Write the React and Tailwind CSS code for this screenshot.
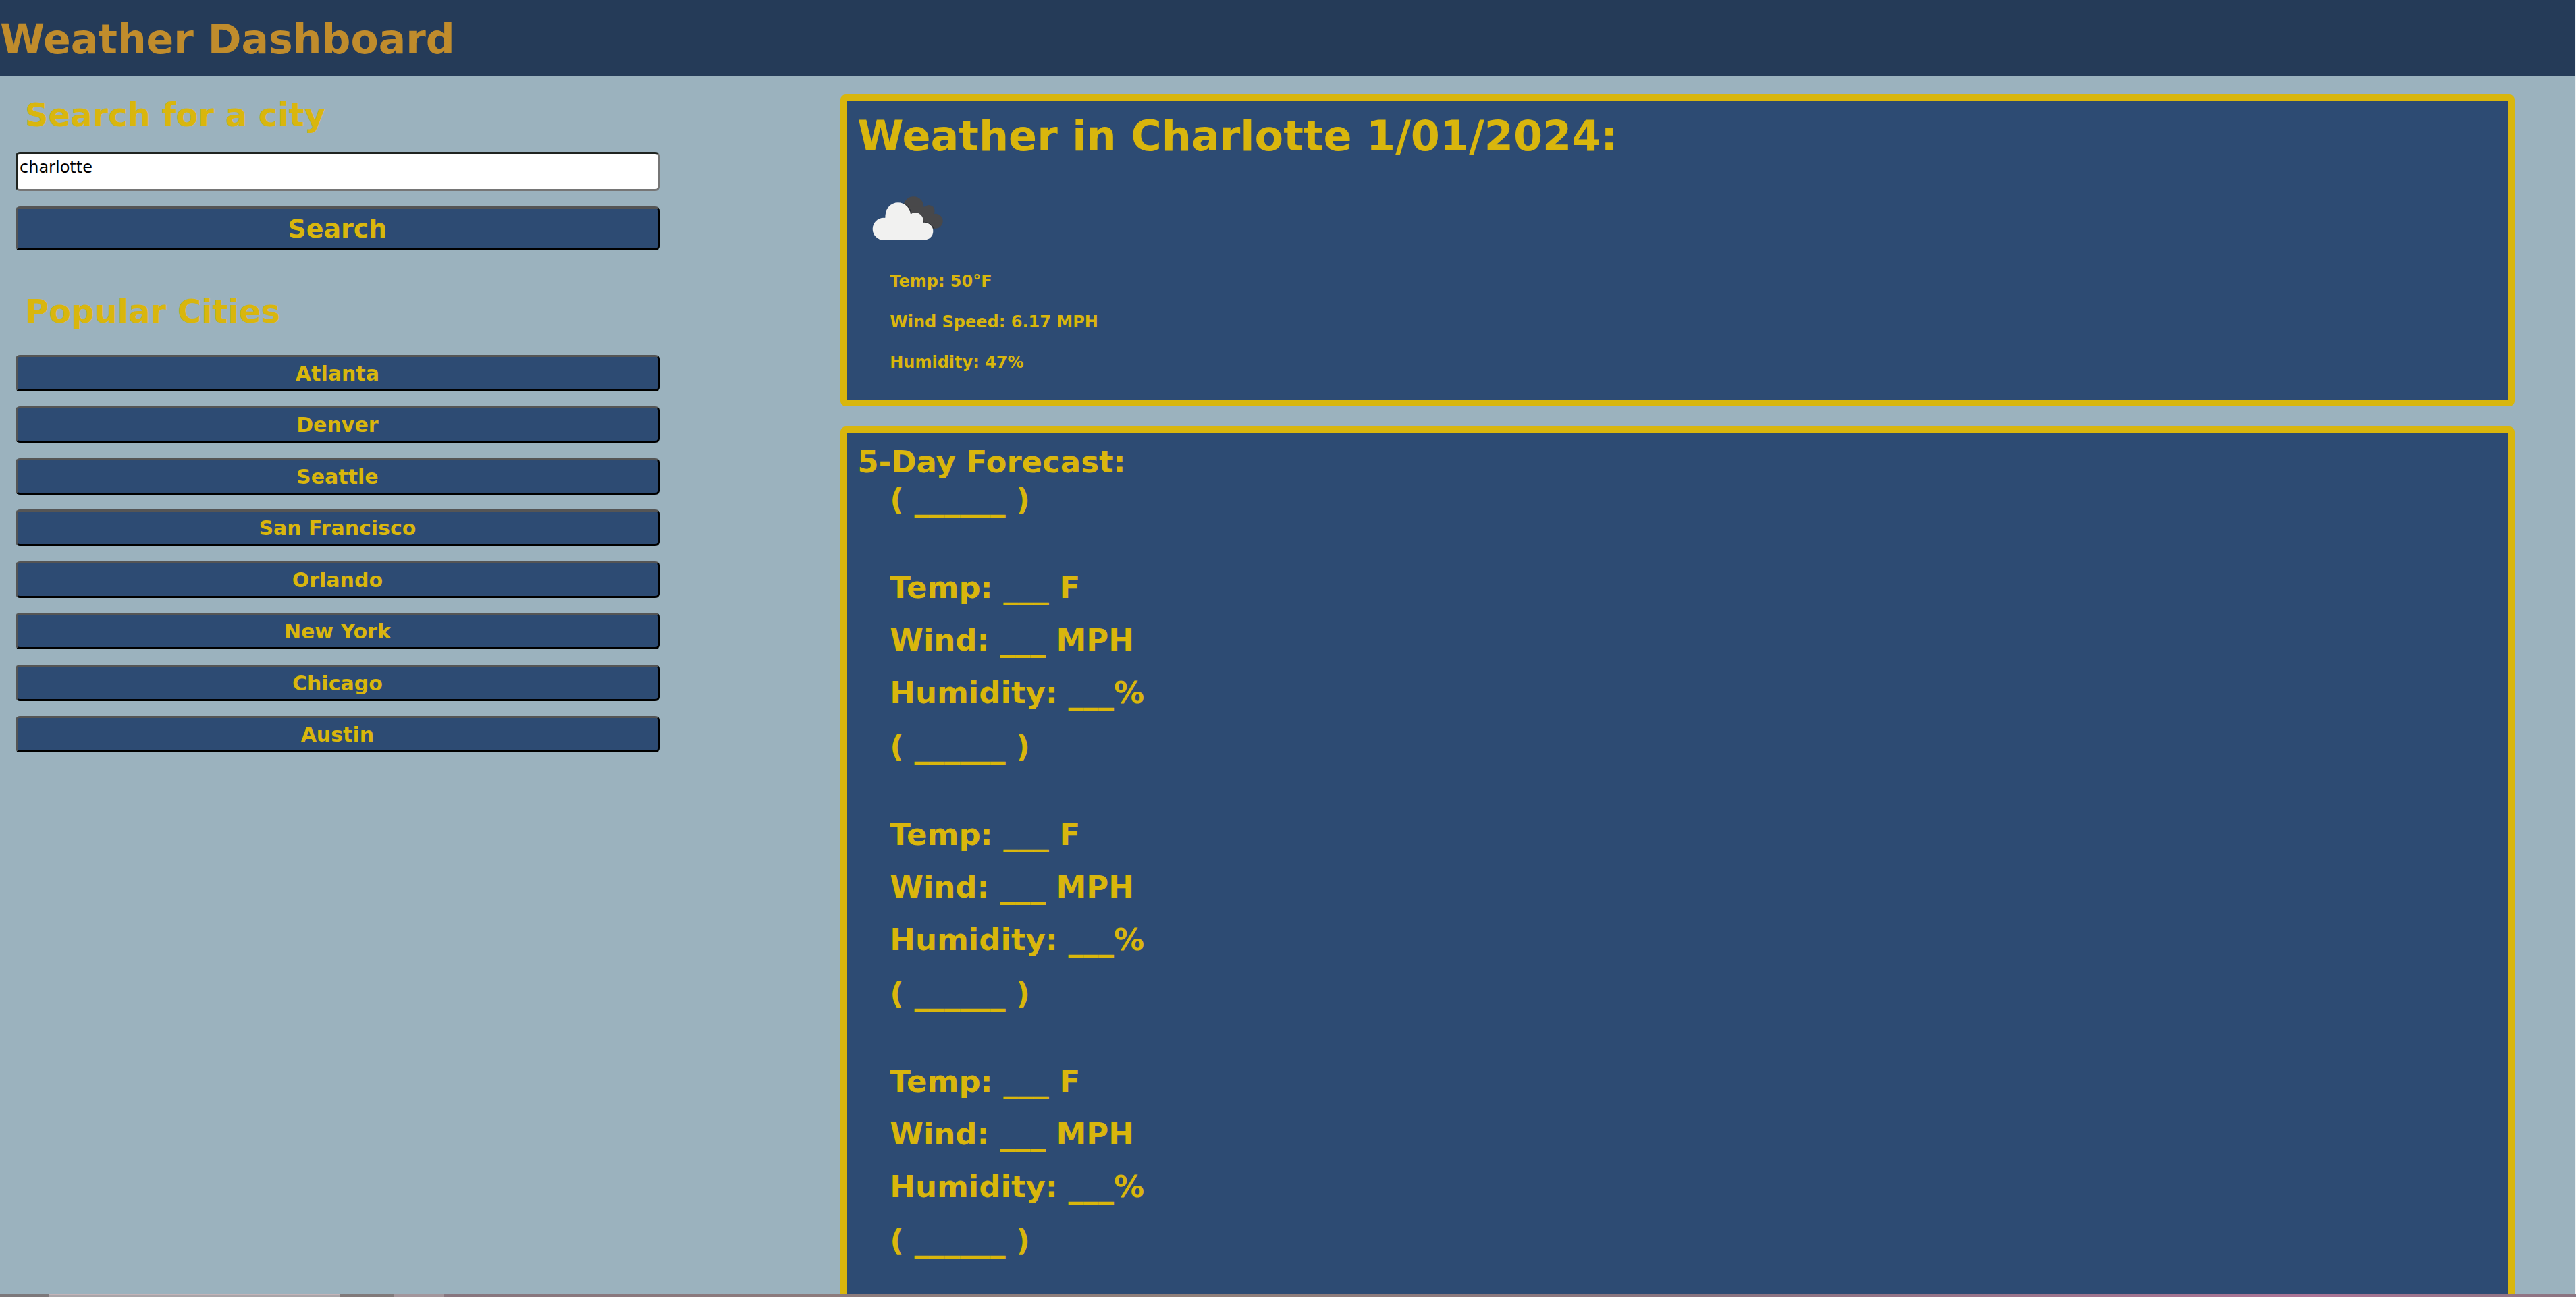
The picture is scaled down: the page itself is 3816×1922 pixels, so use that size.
const CITIES = ["Atlanta", "Denver", "Seattle", "San Francisco", "Orlando", "New York", "Chicago", "Austin"];
const DAYS = [1, 2, 3, 4, 5];

const bevel =
  "block w-full rounded-[6px] border-t-[#555555] border-l-[#555555] border-r-black border-b-black bg-[#2d4b73] font-bold text-[#d9b60d]";

function Clouds() {
  return (
    <svg className="mt-8 block h-[100px] w-[150px]" viewBox="0 0 450 300" role="img" aria-label="Broken clouds">
      <g fill="#48484a">
        <circle cx="250" cy="109" r="45" />
        <circle cx="318" cy="128" r="26" />
        <circle cx="347" cy="173" r="33" />
        <path d="M230 110H300L340 140L345 206H260Z" />
      </g>
      <g fill="#2b2d31">
        <path d="M206 94Q236 108 240 137Q284 128 296 176Q325 178 341 203L320 220L240 200Z" />
      </g>
      <g fill="#f1f1f0">
        <circle cx="118" cy="208" r="50" />
        <circle cx="181" cy="147" r="56" />
        <circle cx="258" cy="171" r="35" />
        <circle cx="298" cy="218" r="39" />
        <path d="M126 140H236L280 185L310 257H112Z" />
      </g>
    </svg>
  );
}

function Day() {
  return (
    <section className="mb-3 pl-12">
      <p className="mb-16 pt-0.5 leading-[54px]">( ______ )</p>
      <p className="leading-[78px]">Temp: ___ F</p>
      <p className="leading-[78px]">Wind: ___ MPH</p>
      <p className="leading-[78px]">Humidity: ___%</p>
    </section>
  );
}

export default function App() {
  return (
    <div className="flex h-screen flex-col overflow-hidden bg-[#9bb2be] font-['DejaVu_Sans',Verdana,sans-serif] text-[#d9b60d]">
      <div className="min-h-0 flex-1 overflow-y-auto border-r border-[#f0f3f5] [scrollbar-width:none]">
        <header className="bg-[#253b58] pt-1 pb-px">
          <h1 className="text-[60px] leading-[108px] font-bold text-[#c08c2c]">Weather Dashboard</h1>
        </header>
        <main className="flex items-start justify-between">
          <aside className="ml-[23px] w-1/4 pt-[25px]">
            <form onSubmit={(e) => e.preventDefault()}>
              <label htmlFor="city" className="block pl-3.5 text-[48px] leading-[64px] font-bold">
                Search for a city
              </label>
              <input
                id="city"
                type="text"
                defaultValue="charlotte"
                className="mt-[23px] block h-[58px] w-full rounded-[6px] border-[3px] border-t-[#1f2420] border-l-[#1f2420] border-r-[#767676] border-b-[#767676] bg-white px-[3px] pb-3 text-[24px] text-black outline-none"
              />
              <button type="submit" className={`mt-[23px] h-[65px] border-[3px] text-[38px] leading-[56px] ${bevel}`}>
                Search
              </button>
            </form>
            <h2 className="mt-[58px] pl-3.5 text-[48px] leading-[64px] font-bold">Popular Cities</h2>
            <ul className="mt-[33px] flex h-[589px] flex-col justify-between">
              {CITIES.map((c) => (
                <li key={c}>
                  <button type="button" className={`h-[54px] border-[3px] pt-0.5 text-[30px] leading-[46px] ${bevel}`}>
                    {c}
                  </button>
                </li>
              ))}
            </ul>
          </aside>
          <div className="mt-[27px] mr-[90px] w-[65%] font-bold">
            <section className="rounded-[8px] border-[9px] border-[#d9b60d] bg-[#2d4b73] px-4 pt-[17px] pb-[26px]">
              <h2 className="text-[62px] leading-[72px]">Weather in Charlotte 1/01/2024:</h2>
              <Clouds />
              <div className="mt-[17px] pl-12 text-[24px] leading-[60px]">
                <p>Temp: 50°F</p>
                <p>Wind Speed: 6.17 MPH</p>
                <p>Humidity: 47%</p>
              </div>
            </section>
            <section className="mt-[30px] rounded-[8px] border-[9px] border-[#d9b60d] bg-[#2d4b73] px-4 pt-[17px] text-[45px]">
              <h2 className="leading-[54px]">5-Day Forecast:</h2>
              {DAYS.map((d) => (
                <Day key={d} />
              ))}
            </section>
          </div>
        </main>
      </div>
      <footer className="flex h-[5px] shrink-0 bg-linear-to-r from-[#7c787b] via-[#8d7d78] to-[#8a7480]">
        <div className="ml-[72px] w-[432px] border-x border-t-2 border-[#c4b4b8] bg-[#a9a5a9]" />
        <div className="ml-20 w-[73px] bg-[#a3969c]" />
        <div className="flex-1 bg-linear-to-r from-[#88767f] from-0% via-[#91807a] via-60% to-[#8a7480]" />
        <div className="w-[1300px] bg-linear-to-r from-[#8a7480] via-[#ad7597] via-70% to-[#8a7480]" />
      </footer>
    </div>
  );
}
